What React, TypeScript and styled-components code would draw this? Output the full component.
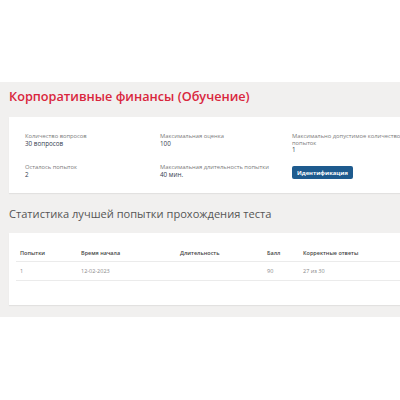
import React, { FC } from "react";
import styled, { createGlobalStyle } from "styled-components";

const GlobalStyle = createGlobalStyle`
  html, body {
    margin: 0;
    padding: 0;
    background: #fff;
    overflow-x: hidden;
  }
  body {
    font-family: "Open Sans", "Noto Sans", sans-serif;
  }
`;

const TopBar = styled.div`
  height: 82px;
  background: #fff;
`;

const Section = styled.section`
  background: #f1f0ef;
  padding: 5px 0 12px 9px;
  overflow: hidden;
`;

const Title = styled.h1`
  margin: 0 0 11px 0;
  font-size: 12.7px;
  font-weight: 600;
  color: #d9263d;
  line-height: 19px;
`;

const Card = styled.div`
  width: 420px;
  background: #fff;
  box-shadow: 0 1px 1px rgba(0, 0, 0, 0.06);
`;

const InfoCard = styled(Card)`
  padding: 16px 0 14px 16px;
  display: grid;
  grid-template-columns: 135px 132px 1fr;
  row-gap: 10px;
  align-items: start;
`;

const Field = styled.div<{ $narrow?: boolean }>`
  display: flex;
  flex-direction: column;
  max-width: ${(p) => (p.$narrow ? "112px" : "none")};
`;

const Label = styled.span`
  font-size: 5.8px;
  line-height: 6.5px;
  color: #7a7a7a;
`;

const Value = styled.span`
  font-size: 6.3px;
  line-height: 8px;
  color: #34404f;
`;

const Button = styled.button`
  margin-top: 2px;
  width: 61px;
  height: 13px;
  padding: 0;
  border: none;
  border-radius: 2px;
  background: #1e5b8e;
  color: #fff;
  font-family: inherit;
  font-size: 5.8px;
  font-weight: 700;
  cursor: pointer;
`;

const SubTitle = styled.h2`
  margin: 13px 0 11px 0;
  font-size: 11.1px;
  font-weight: 400;
  color: #555;
  line-height: 16px;
`;

const TableCard = styled(Card)`
  padding: 13px 0 24px 7px;
`;

const Table = styled.table`
  width: 100%;
  border-collapse: collapse;
  table-layout: fixed;
`;

const Th = styled.th<{ $w?: number }>`
  width: ${(p) => (p.$w ? `${p.$w}px` : "auto")};
  text-align: left;
  font-size: 5.5px;
  font-weight: 600;
  color: #444;
  padding: 3px 4px 4px 4px;
  border-bottom: 1px solid #ebebeb;
`;

const Td = styled.td`
  text-align: left;
  font-size: 5.5px;
  color: #888;
  padding: 5px 4px 5px 4px;
  border-bottom: 1px solid #ebebeb;
`;

const App: FC = () => {
  return (
    <>
      <GlobalStyle />
      <TopBar />
      <Section>
        <Title>Корпоративные финансы (Обучение)</Title>
        <InfoCard>
          <Field>
            <Label>Количество вопросов</Label>
            <Value>30 вопросов</Value>
          </Field>
          <Field>
            <Label>Максимальная оценка</Label>
            <Value>100</Value>
          </Field>
          <Field $narrow>
            <Label>Максимально допустимое количество попыток</Label>
            <Value>1</Value>
          </Field>
          <Field>
            <Label>Осталось попыток</Label>
            <Value>2</Value>
          </Field>
          <Field>
            <Label>Максимальная длительность попытки</Label>
            <Value>40 мин.</Value>
          </Field>
          <Field>
            <Button>Идентификация</Button>
          </Field>
        </InfoCard>
        <SubTitle>Статистика лучшей попытки прохождения теста</SubTitle>
        <TableCard>
          <Table>
            <thead>
              <tr>
                <Th $w={53}>Попытки</Th>
                <Th $w={91}>Время начала</Th>
                <Th $w={79}>Длительность</Th>
                <Th $w={28}>Балл</Th>
                <Th>Корректные ответы</Th>
              </tr>
            </thead>
            <tbody>
              <tr>
                <Td>1</Td>
                <Td>12-02-2023</Td>
                <Td></Td>
                <Td>90</Td>
                <Td>27 из 30</Td>
              </tr>
            </tbody>
          </Table>
        </TableCard>
      </Section>
    </>
  );
};

export default App;
